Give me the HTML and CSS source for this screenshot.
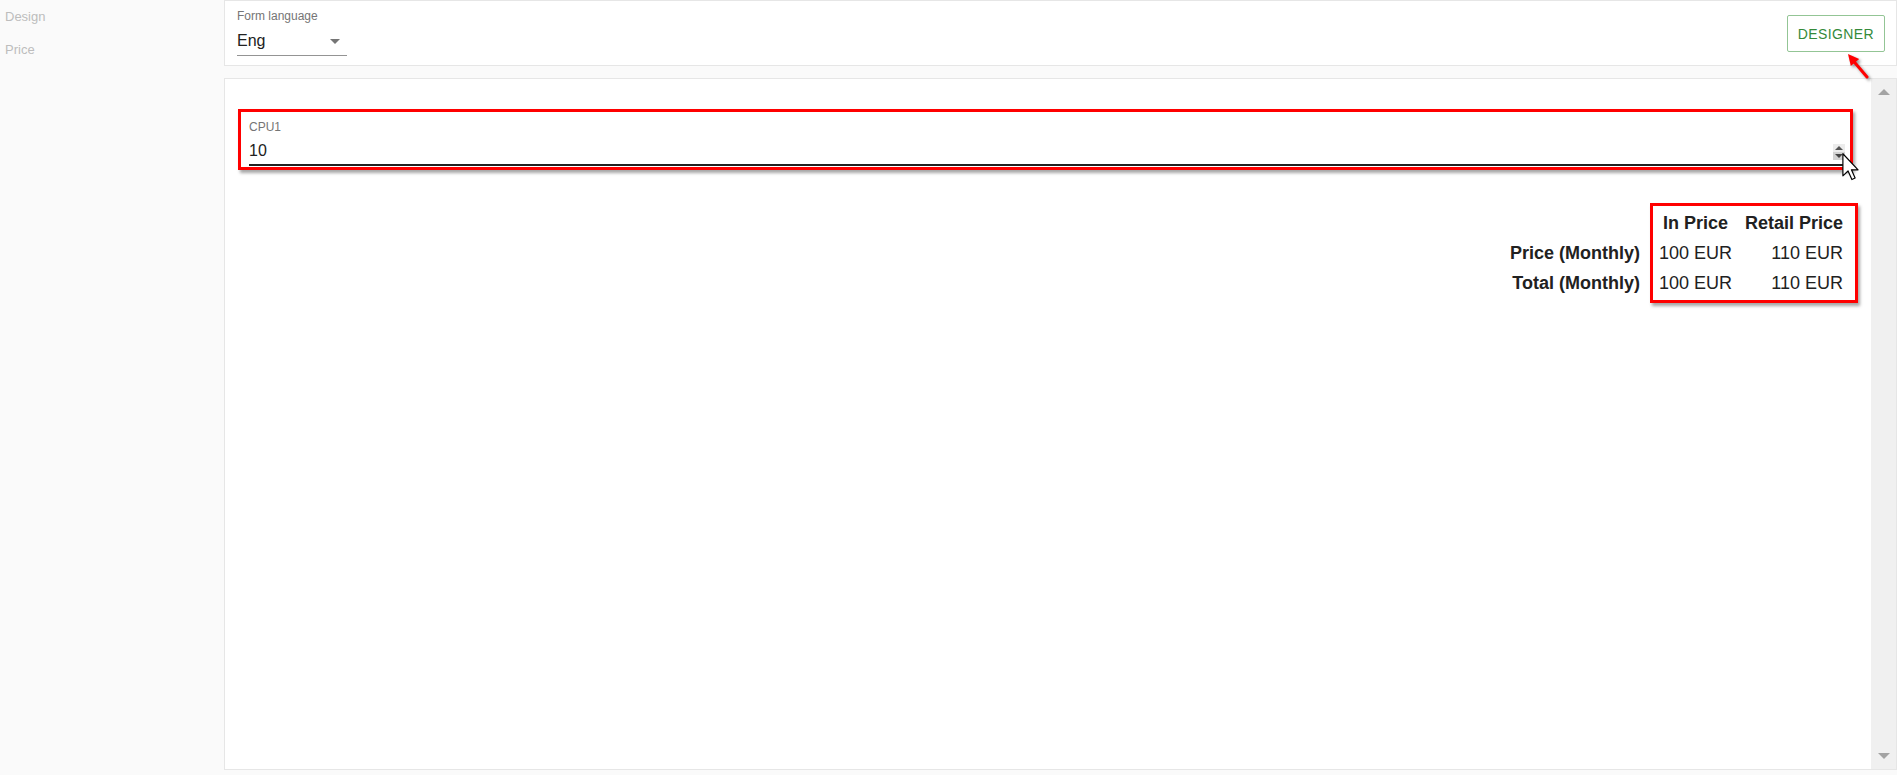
FILE: index.html
```html
<!DOCTYPE html>
<html lang="en">
<head>
  <meta charset="UTF-8" />
  <meta name="viewport" content="width=device-width, initial-scale=1.0" />
  <title>Form designer - Price</title>
  <link rel="stylesheet" href="styles.css">
</head>
<body>
  <div class="app">
    <nav class="sidebar">
      <a class="nav-link">Design</a>
      <a class="nav-link">Price</a>
    </nav>

    <main class="main">
      <header class="toolbar">
        <div class="lang-field">
          <label class="field-label">Form language</label>
          <div class="lang-select">
            <span>Eng</span>
            <span class="caret"></span>
          </div>
        </div>
        <button class="designer-btn">DESIGNER</button>
      </header>

      <section class="form-card">
        <div class="form-body">
          <div class="num-field marked">
            <label class="field-label">CPU1</label>
            <div class="num-input">
              <span class="num-value">10</span>
              <span class="spinner">
                <span class="spin spin-up"></span>
                <span class="spin spin-down"></span>
              </span>
            </div>
          </div>

          <div class="price-block">
            <div class="price-labels">
              <div class="price-row"></div>
              <div class="price-row">Price (Monthly)</div>
              <div class="price-row">Total (Monthly)</div>
            </div>
            <div class="price-grid marked">
              <div class="price-row head center">In Price</div>
              <div class="price-row head right">Retail Price</div>
              <div class="price-row center">100 EUR</div>
              <div class="price-row right">110 EUR</div>
              <div class="price-row center">100 EUR</div>
              <div class="price-row right">110 EUR</div>
            </div>
          </div>
        </div>
        <div class="scrollbar">
          <span class="scroll-arrow up"></span>
          <span class="scroll-arrow down"></span>
        </div>
      </section>
    </main>

    <!-- annotations drawn over the screenshot -->
    <svg class="callout" width="34" height="36" viewBox="0 0 34 36">
      <line x1="13" y1="12.5" x2="27" y2="29" stroke="#f00" stroke-width="3" stroke-linecap="round"/>
      <polygon points="8,6 10.8,18 19.2,11" fill="#f00"/>
    </svg>
    <svg class="pointer" width="18" height="28" viewBox="0 0 12 19">
      <path d="M0.5 0.5 L0.5 15.5 L4 12.2 L6.6 18 L8.8 17 L6.3 11.4 L10.8 11.4 Z" fill="#fff" stroke="#000" stroke-width="0.8" stroke-linejoin="round"/>
    </svg>
  </div>
</body>
</html>
```

FILE: styles.css
```css
* {
  box-sizing: border-box;
}
body {
  margin: 0;
  font-family: 'Liberation Sans', Arial, sans-serif;
  color: #212121;
  background: #fafafa;
}
.app {
  position: relative;
  display: flex;
  height: 100vh;
  overflow: hidden;
}
.sidebar {
  width: 224px;
  flex-shrink: 0;
  display: flex;
  flex-direction: column;
  padding: 0 5px;
}
.nav-link {
  font-size: 13px;
  line-height: 33px;
  color: #bdbdbd;
}
.main {
  flex: 1;
  display: flex;
  flex-direction: column;
  gap: 12px;
  padding-bottom: 5px;
  min-width: 0;
}
.toolbar {
  height: 66px;
  flex-shrink: 0;
  background: #fff;
  border: 1px solid #e6e6e6;
  display: flex;
  justify-content: space-between;
  align-items: flex-start;
  padding: 8px 11px 0 12px;
}
.field-label {
  display: block;
  font-size: 12px;
  line-height: 14px;
  color: #757575;
}
.lang-select {
  width: 110px;
  display: flex;
  justify-content: space-between;
  align-items: center;
  font-size: 16px;
  line-height: 19px;
  padding: 8px 7px 5px 0;
  border-bottom: 1px solid #949494;
}
.caret {
  width: 0;
  height: 0;
  border-left: 5px solid transparent;
  border-right: 5px solid transparent;
  border-top: 5px solid #757575;
  margin-top: 2px;
}
.designer-btn {
  margin-top: 6px;
  height: 37px;
  padding: 0 10px;
  background: #fff;
  border: 1px solid #93c595;
  border-radius: 2px;
  color: #358a3a;
  font-family: inherit;
  font-size: 14px;
  letter-spacing: 0.4px;
  cursor: pointer;
}
.form-card {
  flex: 1;
  display: flex;
  background: #fff;
  border: 1px solid #e6e6e6;
  min-height: 0;
}
.form-body {
  flex: 1;
  padding: 30px 18px 0 13px;
  display: flex;
  flex-direction: column;
}
.marked {
  border: 3px solid #f00;
  box-shadow: 2px 3px 3px rgba(0, 0, 0, 0.35);
}
.num-field {
  padding: 7px 5px 1px 8px;
}
.num-field .field-label {
  line-height: 16px;
}
.num-input {
  display: flex;
  justify-content: space-between;
  align-items: center;
  padding: 6px 0 3px;
  border-bottom: 2px solid #212121;
}
.num-value {
  font-size: 16px;
  line-height: 20px;
}
.spinner {
  display: flex;
  flex-direction: column;
  width: 12px;
  margin-top: 2px;
}
.spin {
  height: 8px;
  display: flex;
  align-items: center;
  justify-content: center;
  background: #ececec;
}
.spin-down {
  background: #d2d2d2;
}
.spin::after {
  content: "";
  border-left: 4px solid transparent;
  border-right: 4px solid transparent;
}
.spin-up::after {
  border-bottom: 4px solid #555;
}
.spin-down::after {
  border-top: 4px solid #444;
}
.price-block {
  align-self: flex-end;
  margin-top: 33px;
  margin-right: -5px;
  display: flex;
  gap: 10px;
  font-size: 18px;
}
.price-row {
  height: 30px;
  line-height: 30px;
  white-space: nowrap;
}
.price-labels {
  padding-top: 5px;
  text-align: right;
  font-weight: bold;
}
.price-grid {
  display: grid;
  grid-template-columns: auto auto;
  column-gap: 13px;
  padding: 2px 12px 2px 6px;
}
.head {
  font-weight: bold;
}
.center {
  text-align: center;
}
.right {
  text-align: right;
}
.scrollbar {
  width: 25px;
  flex-shrink: 0;
  background: #f0f0f0;
  display: flex;
  flex-direction: column;
  justify-content: space-between;
  align-items: center;
  padding: 10px 0 10px;
}
.scroll-arrow {
  width: 0;
  height: 0;
  border-left: 6px solid transparent;
  border-right: 6px solid transparent;
}
.scroll-arrow.up {
  border-bottom: 6px solid #a3a3a3;
}
.scroll-arrow.down {
  border-top: 6px solid #a3a3a3;
}
.callout {
  position: absolute;
  left: 1840px;
  top: 48px;
  filter: drop-shadow(2px 2px 1.5px rgba(0, 0, 0, 0.4));
}
.pointer {
  position: absolute;
  left: 1842px;
  top: 153px;
}
```
